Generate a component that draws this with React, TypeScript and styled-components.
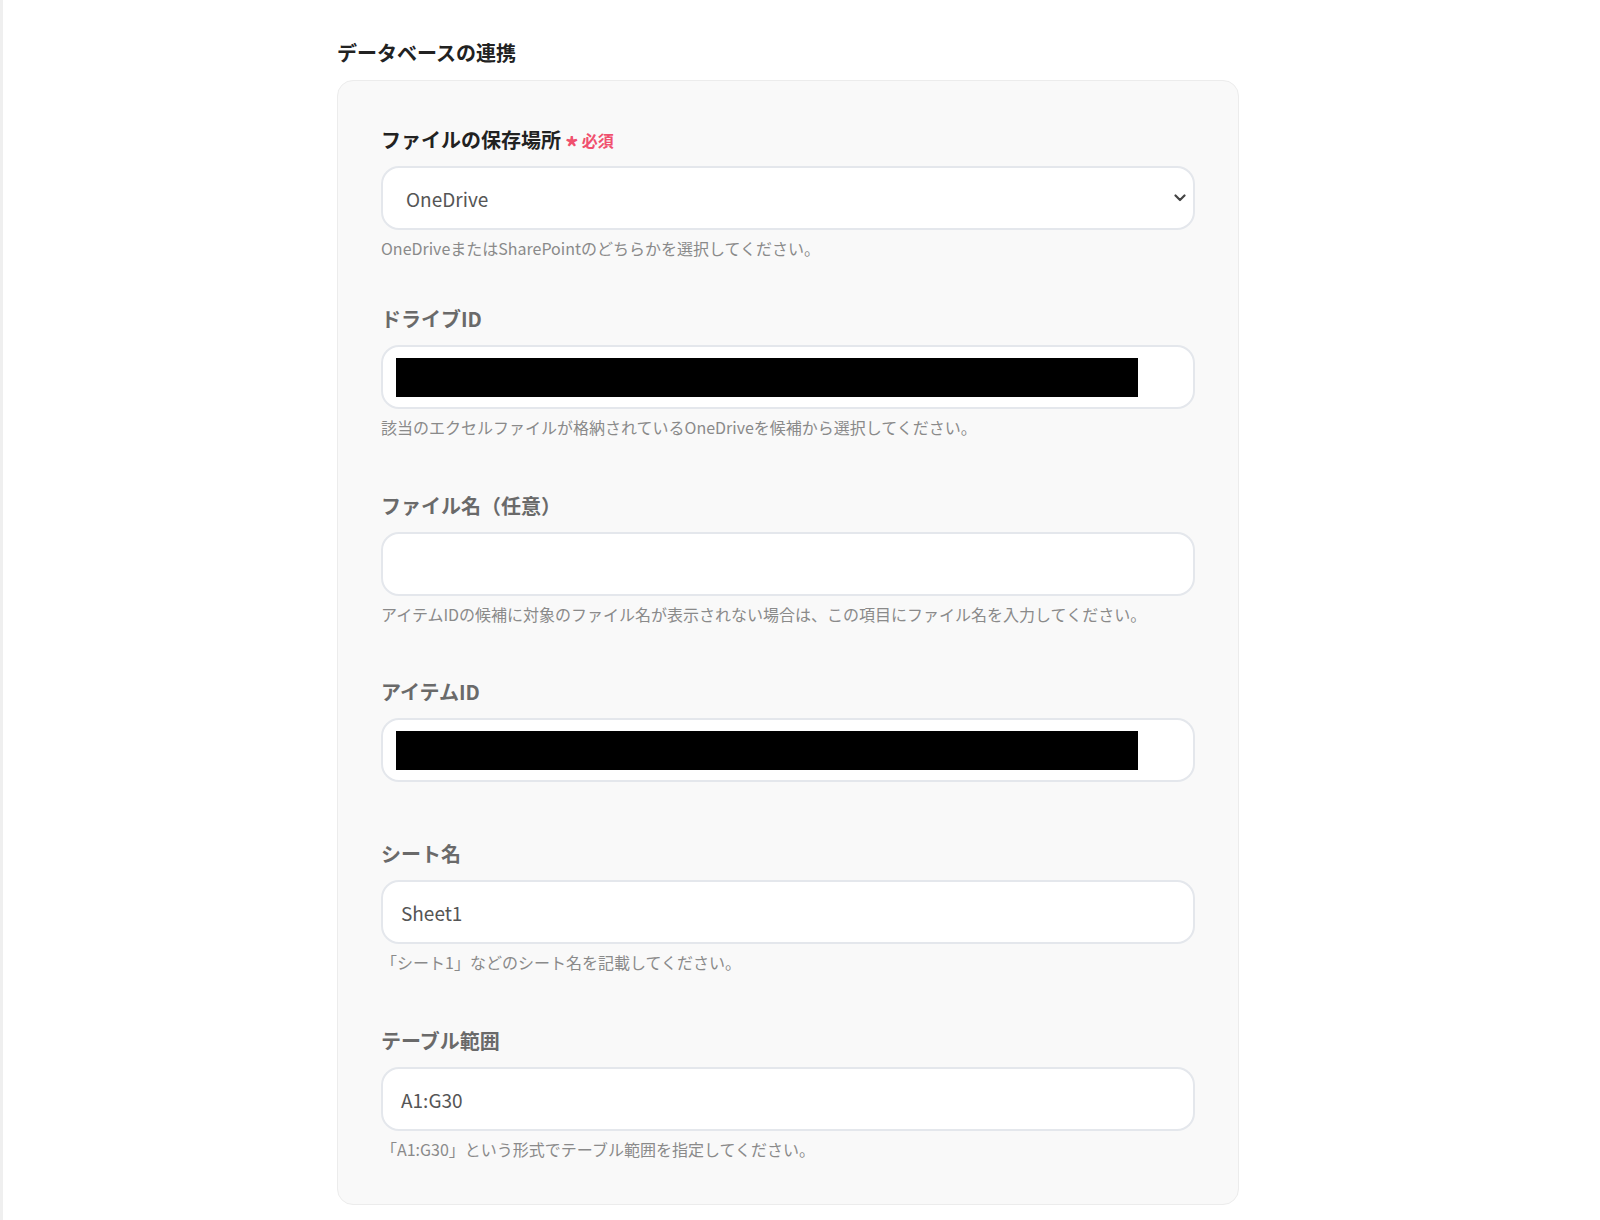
import styled, { createGlobalStyle } from "styled-components";

const GlobalStyle = createGlobalStyle`
  body {
    margin: 0;
    background: #ffffff;
    font-family: "Noto Sans CJK JP", "Noto Sans", sans-serif;
  }
`;

const Page = styled.div`
  min-height: 1220px;
  border-left: 3px solid #efefef;
  box-sizing: border-box;
  padding: 40px 0 16px 334px;
`;

const Section = styled.section`
  width: 902px;
`;

const Heading = styled.h2`
  margin: 0 0 14px;
  font-size: 20px;
  line-height: 26px;
  font-weight: 700;
  color: #222;
`;

const Card = styled.div`
  background: #f9f9f9;
  border: 1px solid #ececec;
  border-radius: 16px;
  padding: 46px 43px 45px;
  display: flex;
  flex-direction: column;
`;

const Field = styled.div<{ $space?: number }>`
  display: flex;
  flex-direction: column;
  margin-bottom: ${(p) => p.$space ?? 0}px;
`;

const Label = styled.label<{ $active?: boolean }>`
  display: flex;
  align-items: center;
  gap: 4px;
  height: 26px;
  margin-bottom: 13px;
  font-size: 20px;
  line-height: 26px;
  font-weight: 700;
  color: ${(p) => (p.$active ? "#222" : "#6a6a6a")};
`;

const Required = styled.span`
  font-size: 16px;
  font-weight: 700;
  color: #f0506e;
  display: inline-flex;
  align-items: center;
  gap: 3px;
  height: 26px;
`;

const Star = styled.span`
  display: inline-block;
  font-size: 27px;
  line-height: 0;
  margin-top: 14px;
`;

const Box = styled.div`
  position: relative;
  height: 64px;
  box-sizing: border-box;
  background: #fff;
  border: 2px solid #e4e7ec;
  border-radius: 18px;
  display: flex;
  align-items: center;
`;

const Value = styled.span<{ $pad?: number }>`
  padding-left: ${(p) => p.$pad ?? 18}px;
  font-size: 19px;
  color: #555;
`;

const Redacted = styled.div`
  margin-left: 13px;
  width: 742px;
  height: 39px;
  background: #000;
`;

const Chevron = styled.svg`
  position: absolute;
  right: 7px;
  top: 50%;
  margin-top: -4px;
`;

const Help = styled.p`
  margin: 8px 0 0;
  font-size: 16px;
  line-height: 20px;
  color: #8a8a8a;
`;

type FieldSpec = {
  label: string;
  active?: boolean;
  required?: boolean;
  value?: string;
  redacted?: boolean;
  select?: boolean;
  help?: string;
  space: number;
};

const fields: FieldSpec[] = [
  {
    label: "ファイルの保存場所",
    active: true,
    required: true,
    value: "OneDrive",
    select: true,
    help: "OneDriveまたはSharePointのどちらかを選択してください。",
    space: 48,
  },
  {
    label: "ドライブID",
    redacted: true,
    help: "該当のエクセルファイルが格納されているOneDriveを候補から選択してください。",
    space: 56,
  },
  {
    label: "ファイル名（任意）",
    help: "アイテムIDの候補に対象のファイル名が表示されない場合は、この項目にファイル名を入力してください。",
    space: 55,
  },
  { label: "アイテムID", redacted: true, space: 59 },
  {
    label: "シート名",
    value: "Sheet1",
    help: "「シート1」などのシート名を記載してください。",
    space: 56,
  },
  {
    label: "テーブル範囲",
    value: "A1:G30",
    help: "「A1:G30」という形式でテーブル範囲を指定してください。",
    space: 0,
  },
];

export default function App() {
  return (
    <>
      <GlobalStyle />
      <Page>
        <Section>
          <Heading>データベースの連携</Heading>
          <Card>
            {fields.map((f) => (
              <Field key={f.label} $space={f.space}>
                <Label $active={f.active}>
                  {f.label}
                  {f.required && (
                    <Required>
                      <Star>*</Star>必須
                    </Required>
                  )}
                </Label>
                <Box>
                  {f.value && <Value $pad={f.select ? 23 : 18}>{f.value}</Value>}
                  {f.redacted && <Redacted />}
                  {f.select && (
                    <Chevron width="12" height="8" viewBox="0 0 12 8">
                      <path d="M1.5 1.5 L6 6 L10.5 1.5" fill="none" stroke="#444" strokeWidth="2.2" strokeLinecap="round" strokeLinejoin="round" />
                    </Chevron>
                  )}
                </Box>
                {f.help && <Help>{f.help}</Help>}
              </Field>
            ))}
          </Card>
        </Section>
      </Page>
    </>
  );
}
